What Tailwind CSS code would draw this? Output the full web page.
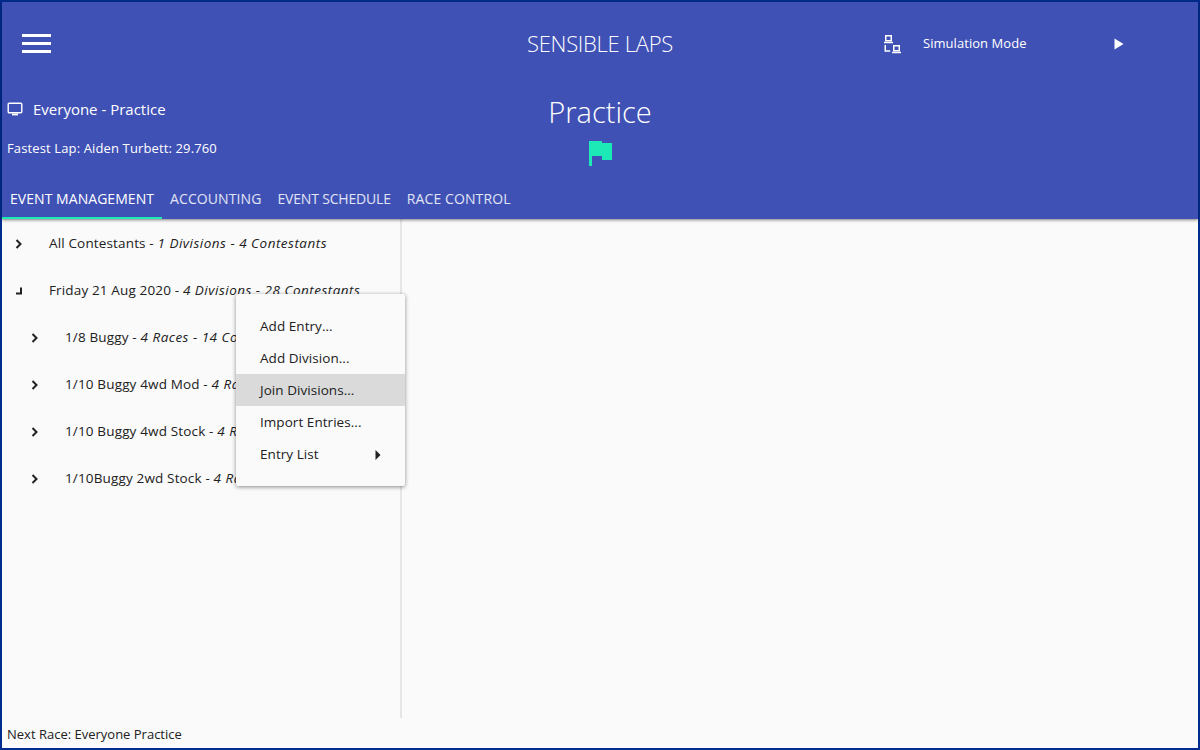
<!DOCTYPE html>
<html lang="en">
<head>
  <meta charset="UTF-8" />
  <title>Sensible Laps</title>
  <script src="https://cdn.jsdelivr.net/npm/@tailwindcss/browser@4"></script>
</head>
<body class="font-['Open_Sans',sans-serif] overflow-hidden">

  <div class="relative w-[1200px] h-[750px] border-2 border-[#002c8f] bg-[#fafafa] flex flex-col text-[#212121]">

    <!-- Header -->
    <header class="h-[217px] shrink-0 bg-[#3f51b5] text-white flex flex-col shadow-[0_1px_3px_rgba(0,0,0,0.5)] z-10">
      <!-- Top row -->
      <div class="h-[84px] shrink-0 grid grid-cols-[1fr_auto_1fr] items-center">
        <div class="pl-[20px]">
          <div class="w-[29px] h-[19px] mb-[2px] flex flex-col justify-between">
            <span class="h-[3px] bg-white"></span>
            <span class="h-[3px] bg-white"></span>
            <span class="h-[3px] bg-white"></span>
          </div>
        </div>
        <h1 class="text-[22px] font-light tracking-[-0.3px] text-center mb-[2px]">SENSIBLE LAPS</h1>
        <div class="flex items-center pl-[210px]">
          <svg width="19" height="19" viewBox="0 0 19 19" fill="none" stroke="white" stroke-width="1.5">
            <rect x="2.75" y="0.75" width="5.5" height="5" />
            <path d="M1 7.5h9" />
            <path d="M2.25 10v6h5" />
            <rect x="10.75" y="10.75" width="5.5" height="5" />
            <path d="M9 17.5h9" />
          </svg>
          <span class="ml-[21px] text-[13px] tracking-[0.05px]">Simulation Mode</span>
          <svg class="ml-[87px]" width="10" height="12" viewBox="0 0 10 12" fill="white"><path d="M0.5 0.5L9.5 6L0.5 11.5Z" /></svg>
        </div>
      </div>

      <!-- Status row -->
      <div class="flex-1 grid grid-cols-[1fr_auto_1fr]">
        <div class="pl-[5px]">
          <div class="flex items-center h-[46px]">
            <svg width="16" height="14" viewBox="0 0 16 14" fill="none" stroke="white" stroke-width="1.4">
              <rect x="1.2" y="1.2" width="13.6" height="9.6" rx="1" />
              <path d="M5 12.5h6" stroke-width="1.8" />
            </svg>
            <span class="ml-[10px] text-[15px]">Everyone - Practice</span>
          </div>
          <p class="mt-[7px] text-[13px] tracking-[0.13px]">Fastest Lap: Aiden Turbett: 29.760</p>
        </div>
        <div class="flex flex-col items-center">
          <h2 class="mt-[2px] text-[29px] font-light leading-[48px]">Practice</h2>
          <svg class="mt-[5px] ml-[1px]" width="23" height="25" viewBox="0 0 23 25" fill="#1de9b6">
            <path d="M0 0h13v2h10v17H13v-4H3v10H0z" />
          </svg>
        </div>
        <div></div>
      </div>

      <!-- Tabs -->
      <nav class="h-[39px] shrink-0 flex text-[14px] font-medium">
        <a class="px-[8px] pt-[8px] tracking-[0.05px] border-b-2 border-[#1de9b6]">EVENT MANAGEMENT</a>
        <a class="px-[8px] pt-[8px] tracking-[0.1px] text-white/85">ACCOUNTING</a>
        <a class="px-[8px] pt-[8px] tracking-[-0.18px] text-white/85">EVENT SCHEDULE</a>
        <a class="px-[8px] pt-[8px] tracking-[0.1px] text-white/85">RACE CONTROL</a>
      </nav>
    </header>

    <!-- Body -->
    <main class="flex-1 min-h-0 flex text-[13.5px] tracking-[0.15px]">
      <section class="w-[400px] shrink-0 border-r-2 border-[#e6e6e6] overflow-hidden pt-[1px]">
        <div class="h-[47px] flex items-center whitespace-nowrap">
          <svg class="ml-[13px] w-[8px]" height="10" viewBox="0 0 8 10" fill="none" stroke="#212121" stroke-width="2"><path d="M1.5 1l4 4-4 4" /></svg>
          <span class="ml-[26px]">All Contestants - <i class="tracking-[0.5px]">1 Divisions - 4 Contestants</i></span>
        </div>
        <div class="h-[47px] flex items-center whitespace-nowrap">
          <svg class="ml-[13px] w-[8px]" height="10" viewBox="0 0 8 10" fill="#212121"><path d="M5 1.5h2v7H1v-2h4z" /></svg>
          <span class="ml-[26px]">Friday 21 Aug 2020 - <i class="tracking-[0.5px]">4 Divisions - 28 Contestants</i></span>
        </div>
        <div class="h-[47px] flex items-center whitespace-nowrap">
          <svg class="ml-[29px] w-[8px]" height="10" viewBox="0 0 8 10" fill="none" stroke="#212121" stroke-width="2"><path d="M1.5 1l4 4-4 4" /></svg>
          <span class="ml-[26px]">1/8 Buggy - <i class="tracking-[0.5px]">4 Races - 14 Contestants</i></span>
        </div>
        <div class="h-[47px] flex items-center whitespace-nowrap">
          <svg class="ml-[29px] w-[8px]" height="10" viewBox="0 0 8 10" fill="none" stroke="#212121" stroke-width="2"><path d="M1.5 1l4 4-4 4" /></svg>
          <span class="ml-[26px]">1/10 Buggy 4wd Mod - <i class="tracking-[0.5px]">4 Races</i></span>
        </div>
        <div class="h-[47px] flex items-center whitespace-nowrap">
          <svg class="ml-[29px] w-[8px]" height="10" viewBox="0 0 8 10" fill="none" stroke="#212121" stroke-width="2"><path d="M1.5 1l4 4-4 4" /></svg>
          <span class="ml-[26px]">1/10 Buggy 4wd Stock - <i class="tracking-[0.5px]">4 Races</i></span>
        </div>
        <div class="h-[47px] flex items-center whitespace-nowrap">
          <svg class="ml-[29px] w-[8px]" height="10" viewBox="0 0 8 10" fill="none" stroke="#212121" stroke-width="2"><path d="M1.5 1l4 4-4 4" /></svg>
          <span class="ml-[26px]">1/10Buggy 2wd Stock - <i class="tracking-[0.5px]">4 Races</i></span>
        </div>
      </section>
      <section class="flex-1"></section>
    </main>

    <!-- Footer -->
    <footer class="h-[30px] shrink-0 pl-[5px] pt-[3px] flex items-center text-[13px]">Next Race: Everyone Practice</footer>

    <!-- Context menu -->
    <div class="absolute left-[234px] top-[292px] z-20 w-[169px] py-[16px] bg-[#fafafa] rounded-[2px] shadow-[0_1px_4px_rgba(0,0,0,0.45)] text-[13.5px] tracking-[0.05px]">
      <div class="h-[32px] pl-[24px] pt-[1px] flex items-center">Add Entry...</div>
      <div class="h-[32px] pl-[24px] pt-[1px] flex items-center">Add Division...</div>
      <div class="h-[32px] pl-[24px] pt-[1px] flex items-center bg-[#dadada]">Join Divisions...</div>
      <div class="h-[32px] pl-[24px] pt-[1px] flex items-center">Import Entries...</div>
      <div class="h-[32px] pl-[24px] pr-[24px] pt-[1px] flex items-center justify-between">
        <span>Entry List</span>
        <svg width="6" height="10" viewBox="0 0 6 10" fill="#212121"><path d="M0.5 0L5.5 5L0.5 10Z" /></svg>
      </div>
    </div>
  </div>

</body>
</html>
